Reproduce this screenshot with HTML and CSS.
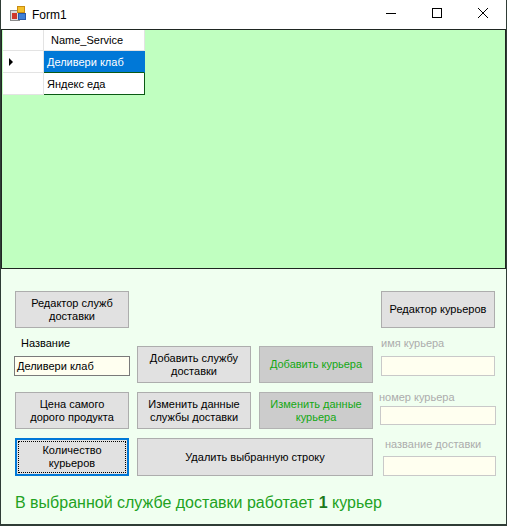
FILE: index.html
```html
<!DOCTYPE html>
<html>
<head>
<meta charset="utf-8">
<link rel="stylesheet" href="styles.css">
</head>
<body>
<div class="window">
  <div class="titlebar">
    <svg class="app-icon" width="16" height="16" viewBox="0 0 16 16">
      <rect x="0.5" y="4.5" width="9" height="10" fill="#dcdcdc" stroke="#8c8c8c"/>
      <rect x="2" y="7" width="5" height="6" fill="#d0392b"/>
      <rect x="7.5" y="0.5" width="7" height="6" fill="#f4c02a" stroke="#c98c12"/>
      <rect x="8.5" y="7.5" width="7" height="6" fill="#3f7fd6" stroke="#2a5aa8"/>
    </svg>
    <span class="title">Form1</span>
    <div class="caption-buttons">
      <div class="cap"><svg width="10" height="10" viewBox="0 0 10 10"><path d="M0 5.5H10" stroke="#000" stroke-width="1"/></svg></div>
      <div class="cap"><svg width="10" height="10" viewBox="0 0 10 10"><rect x="0.5" y="0.5" width="9" height="9" fill="none" stroke="#000"/></svg></div>
      <div class="cap"><svg width="10" height="10" viewBox="0 0 10 10"><path d="M0 0L10 10M10 0L0 10" stroke="#000" stroke-width="1"/></svg></div>
    </div>
  </div>
  <div class="client">
    <div class="gridview">
      <div class="dgv">
        <div class="cell corner"></div>
        <div class="cell colhead">Name_Service</div>
        <div class="cell rowhead"><span class="arrow"></span></div>
        <div class="cell data selected">Деливери клаб</div>
        <div class="cell rowhead"></div>
        <div class="cell data">Яндекс еда</div>
      </div>
    </div>
    <div class="panel">
      <button class="btn a1">Редактор служб<br>доставки</button>
      <button class="btn a4">Редактор курьеров</button>

      <div class="field b1">
        <span class="lbl dark">Название</span>
        <div class="tb dark-tb">Деливери клаб</div>
      </div>
      <button class="btn b-btn b2">Добавить службу<br>доставки</button>
      <button class="btn green b-btn b3">Добавить курьера</button>
      <div class="field b4">
        <span class="lbl">имя курьера</span>
        <div class="tb"></div>
      </div>

      <button class="btn c1">Цена самого<br>дорого продукта</button>
      <button class="btn c2">Изменить данные<br>службы доставки</button>
      <button class="btn green c3">Изменить данные<br>курьера</button>
      <div class="field c4">
        <span class="lbl">номер курьера</span>
        <div class="tb tb-c"></div>
      </div>

      <button class="btn focused d1">Количество<br>курьеров</button>
      <button class="btn d2">Удалить выбранную строку</button>
      <div class="field d4">
        <span class="lbl">название доставки</span>
        <div class="tb tb-d"></div>
      </div>
    </div>
    <p class="status">В выбранной службе доставки работает <b class="num">1</b> курьер</p>
  </div>
</div>
</body>
</html>
```
FILE: styles.css
```css
* { box-sizing: border-box; }
html, body { margin: 0; padding: 0; background: #ffffff; }
body { font-family: "Liberation Sans", Arial, sans-serif; font-size: 11px; }

.window {
  width: 507px;
  height: 526px;
  border: 1px solid #2f3c36;
  border-top: 0;
  border-bottom-width: 2px;
  display: flex;
  flex-direction: column;
  background: #f0fff0;
  overflow: hidden;
}

.titlebar {
  height: 29px;
  flex: none;
  background: #ffffff;
  display: flex;
  align-items: center;
}
.app-icon { margin-left: 9px; margin-top: -1px; flex: none; }
.title {
  margin-left: 6px;
  font-size: 12px;
  color: #000;
  font-family: "Liberation Sans", Arial, sans-serif;
}
.caption-buttons { margin-left: auto; display: flex; height: 29px; }
.cap { width: 46px; height: 29px; display: flex; align-items: center; justify-content: center; padding-bottom: 3px; }
.cap svg { display: block; }

.client { flex: 1; background: #f0fff0; display: flex; flex-direction: column; }

.gridview {
  height: 240px;
  border: 1px solid #1f2622;
  background: #c0ffc0;
  flex: none;
}
.dgv {
  display: grid;
  grid-template-columns: 41px 101px;
  grid-template-rows: 21px 22px 22px;
  margin-left: 1px;
  width: 142px;
}
.cell {
  background: #ffffff;
  display: flex;
  align-items: center;
  color: #000;
  white-space: nowrap;
}
.corner, .colhead, .rowhead {
  border-right: 1px solid #e3e3e3;
  border-bottom: 1px solid #e3e3e3;
}
.colhead { padding-left: 7px; }
.rowhead { padding-left: 6px; }
.arrow {
  width: 0; height: 0;
  border-top: 4px solid transparent;
  border-bottom: 4px solid transparent;
  border-left: 4px solid #000;
}
.data {
  padding-left: 3px;
  border-right: 1px solid #0a5a14;
  border-bottom: 1px solid #0a5a14;
}
.data.selected { background: #0078d7; color: #fff; border-right-color: #0078d7; }

.panel {
  display: grid;
  grid-template-columns: repeat(4, 114px);
  grid-template-rows: 37px 46px 37px 38px;
  column-gap: 8px;
  row-gap: 9px;
  padding: 22px 0 0 14px;
}

.btn {
  font-family: "Liberation Sans", Arial, sans-serif;
  font-size: 11px;
  line-height: 13px;
  color: #000;
  background: #e1e1e1;
  border: 1px solid #adadad;
  margin: 0;
  padding: 0 2px;
  text-align: center;
}
.btn.green { background: #cccccc; border-color: #b2b2b2; color: #13a813; }
.btn.focused { border: 2px solid #0078d7; outline: 1px dotted #000; outline-offset: -4px; }
.a1 { grid-area: 1 / 1; }
.a4 { grid-area: 1 / 4; }
.b-btn { align-self: end; height: 37px; }
.b2 { grid-area: 2 / 2; }
.b3 { grid-area: 2 / 3; }
.c1 { grid-area: 3 / 1; }
.c2 { grid-area: 3 / 2; }
.c3 { grid-area: 3 / 3; }
.d1 { grid-area: 4 / 1; }
.d2 { grid-area: 4 / 2 / 5 / 4; }

.field { display: flex; flex-direction: column; align-items: flex-start; }
.lbl { line-height: 13px; color: #acacac; white-space: nowrap; }
.lbl.dark { color: #000; margin-left: 6px; }
.tb {
  background: #fffff0;
  border: 1px solid #c9c9c9;
  height: 20px;
  width: 114px;
  margin-top: 6px;
  padding-left: 2px;
  line-height: 18px;
  color: #000;
}
.tb.dark-tb { border-color: #7a7a7a; width: 116px; margin-left: -1px; }
.b1 { grid-area: 2 / 1; }
.b4 { grid-area: 2 / 4; }
.c4 { grid-area: 3 / 4; margin-top: -1px; }
.c4 .lbl { margin-left: -2px; }
.tb.tb-c { height: 19px; width: 116px; margin-left: -1px; margin-top: 2px; }
.d4 { grid-area: 4 / 4; }
.d4 .lbl { margin-left: 4px; }
.tb.tb-d { width: 113px; margin-left: 2px; margin-top: 5px; }

.status {
  margin: 18px 0 0 0;
  padding-left: 14px;
  font-size: 16px;
  line-height: 18px;
  color: #22a222;
  white-space: nowrap;
}
.num { color: #1c7a1c; font-weight: bold; }
```
